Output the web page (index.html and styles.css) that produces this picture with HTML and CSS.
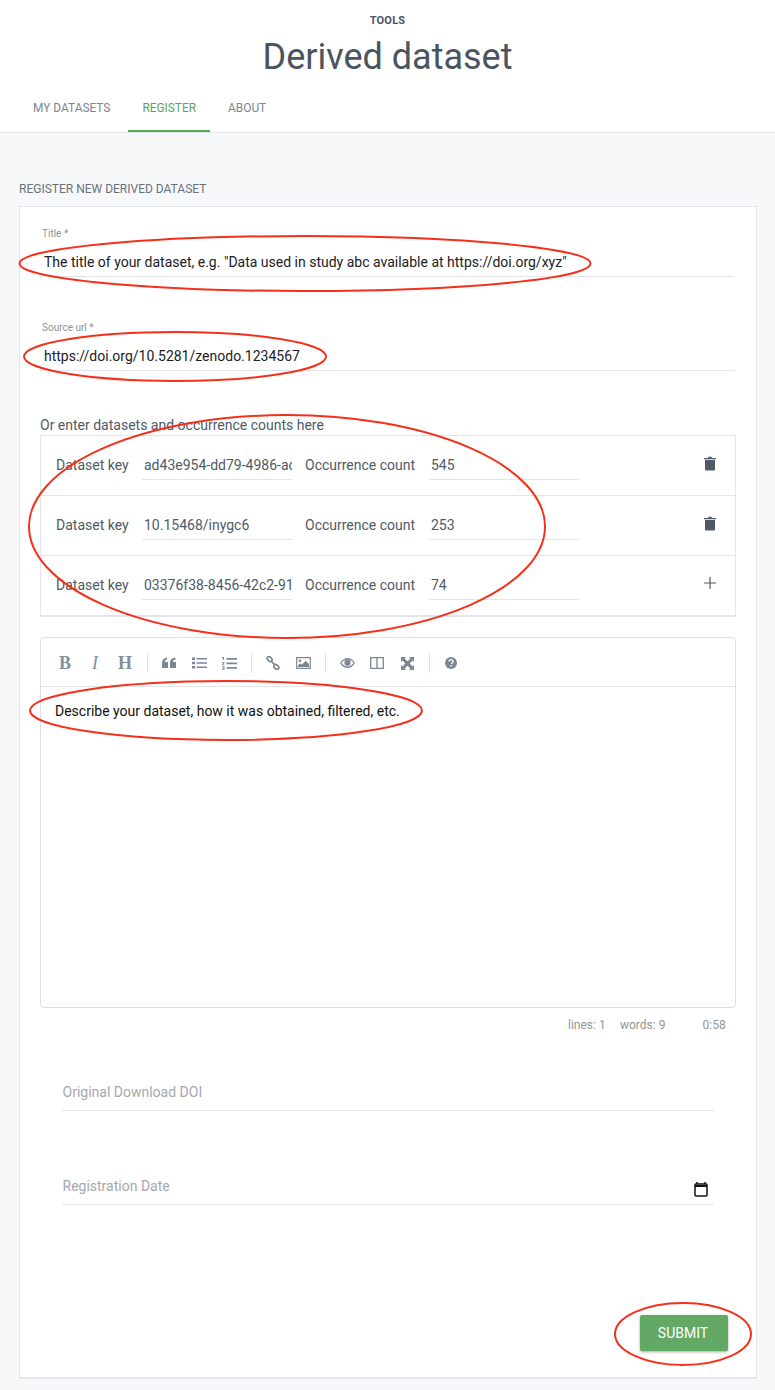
FILE: index.html
```html
<!DOCTYPE html>
<html lang="en">
<head>
<meta charset="utf-8">
<title>Derived dataset</title>
<link rel="stylesheet" href="styles.css">
</head>
<body>
<div class="page">
  <header class="head">
    <div class="eyebrow">Tools</div>
    <h1 class="title">Derived dataset</h1>
    <nav class="tabs">
      <a class="tab">My datasets</a>
      <a class="tab tab-on">Register</a>
      <a class="tab">About</a>
    </nav>
  </header>
  <main class="main">
    <h2 class="section">Register new derived dataset</h2>
    <section class="card">
      <div class="field field-title">
        <label class="flabel">Title *</label>
        <div class="finput">The title of your dataset, e.g. "Data used in study abc available at https://doi.org/xyz"</div>
      </div>
      <div class="field field-url">
        <label class="flabel">Source url *</label>
        <div class="finput">https://doi.org/10.5281/zenodo.1234567</div>
      </div>
      <div class="or">Or enter datasets and occurrence counts here</div>
      <div class="rows">
        <div class="row">
          <span class="rlabel rl1">Dataset key</span><div class="rinput">ad43e954-dd79-4986-ac</div>
          <span class="rlabel rl2">Occurrence count</span><div class="rinput">545</div>
          <span class="ricon"><svg width="12" height="15" viewBox="0 0 12 15"><path d="M0 2h4l.6-1.2h2.800L8 2h4v1.200H0z" fill="#4f5a66"/><path d="M1 4h10v9.400c0 .7-.5 1.200-1.200 1.200H2.200c-.7 0-1.200-.5-1.200-1.200z" fill="#4f5a66"/></svg></span>
        </div>
        <div class="row">
          <span class="rlabel rl1">Dataset key</span><div class="rinput">10.15468/inygc6</div>
          <span class="rlabel rl2">Occurrence count</span><div class="rinput">253</div>
          <span class="ricon"><svg width="12" height="15" viewBox="0 0 12 15"><path d="M0 2h4l.6-1.2h2.800L8 2h4v1.200H0z" fill="#4f5a66"/><path d="M1 4h10v9.400c0 .7-.5 1.200-1.200 1.200H2.200c-.7 0-1.200-.5-1.200-1.200z" fill="#4f5a66"/></svg></span>
        </div>
        <div class="row row-last">
          <span class="rlabel rl1">Dataset key</span><div class="rinput">03376f38-8456-42c2-91</div>
          <span class="rlabel rl2">Occurrence count</span><div class="rinput">74</div>
          <span class="ricon"><svg width="12" height="12" viewBox="0 0 12 12"><path d="M6 0v12M0 6h12" stroke="#4f5a66" stroke-width="1.200" fill="none"/></svg></span>
        </div>
      </div>
      <div class="editor">
        <div class="toolbar">
          <span class="tb tb-b">B</span>
          <span class="tb tb-i">I</span>
          <span class="tb tb-h">H</span>
          <i class="sep"></i>
          <span class="tb"><svg width="14" height="12" viewBox="0 0 14 12"><path d="M0 6.500C0 3 1.500 1 5 .5v2C3.800 2.800 3 3.600 3 5h3v6H0zM8 6.500C8 3 9.500 1 13.500.5v2C12 2.800 11 3.600 11 5h3v6H8z" fill="#7b8794"/></svg></span>
          <span class="tb"><svg width="15" height="12" viewBox="0 0 15 12"><path d="M0 .5h3v2.500H0zM0 4.800h3v2.500H0zM0 9h3v2.500H0zM4.500 1h10.500v1.600H4.500zM4.500 5.200h10.500v1.600H4.500zM4.500 9.400h10.500V11H4.500z" fill="#7b8794"/></svg></span>
          <span class="tb"><svg width="15" height="13" viewBox="0 0 15 13"><path d="M0 0h2v3H1V1H0zM0 5h2.500v1L1 7.400h1.500v.8H0v-1l1.500-1.400H0zM0 9.500h2.500v3.300H0V12h1.500v-.5H.5v-.7h1v-.5H0zM4.500 1h10.500v1.700H4.500zM4.500 5.500h10.500v1.700H4.500zM4.500 10h10.500v1.700H4.500z" fill="#7b8794"/></svg></span>
          <i class="sep"></i>
          <span class="tb"><svg width="14" height="14" viewBox="0 0 14 14"><g fill="none" stroke="#7b8794" stroke-width="1.700"><rect x=".9" y="1.300" width="5.600" height="3.600" rx="1.800" transform="rotate(45 3.700 3.100)"/><rect x="7.500" y="9.100" width="5.600" height="3.600" rx="1.800" transform="rotate(45 10.300 10.900)"/><path d="M5.500 5.500l3 3"/></g></svg></span>
          <span class="tb"><svg width="15" height="12" viewBox="0 0 15 12"><path d="M.7.7h13.600v10.600H.7z" fill="none" stroke="#7b8794" stroke-width="1.200"/><circle cx="4" cy="3.800" r="1.300" fill="#7b8794"/><path d="M2 10V8.300l2.500-2 1.600 1.300 3.600-3.800L13 7v3z" fill="#7b8794"/></svg></span>
          <i class="sep"></i>
          <span class="tb"><svg width="15" height="10" viewBox="0 0 15 10"><path d="M0 5C1.800 2 4.500 0 7.500 0S13.200 2 15 5c-1.800 3-4.500 5-7.500 5S1.800 8 0 5z" fill="#7b8794"/><path d="M1.400 5C3 3 5 1.600 7.500 1.600S12 3 13.600 5C12 7 10 8.400 7.500 8.400S3 7 1.400 5z" fill="#fff"/><circle cx="7.500" cy="4.700" r="3.100" fill="#7b8794"/></svg></span>
          <span class="tb"><svg width="14" height="12" viewBox="0 0 14 12"><path d="M.7.7h12.600v10.600H.7zM7 .7v10.600" fill="none" stroke="#7b8794" stroke-width="1.300"/></svg></span>
          <span class="tb"><svg width="13" height="13" viewBox="0 0 13 13"><path d="M0 0h5L3.600 1.400 6.500 4.300 9.400 1.400 8 0h5v5l-1.400-1.400L8.700 6.500l2.900 2.900L13 8v5H8l1.400-1.400-2.900-2.900-2.900 2.900L5 13H0V8l1.400 1.400 2.900-2.900-2.900-2.900L0 5z" fill="#7b8794"/></svg></span>
          <i class="sep"></i>
          <span class="tb"><svg width="12" height="12" viewBox="0 0 12 12"><circle cx="6" cy="6" r="6" fill="#7b8794"/><path d="M4 4.500C4 3.300 4.900 2.700 6 2.700s2 .7 2 1.800c0 1.400-1.500 1.400-1.500 2.500" fill="none" stroke="#fff" stroke-width="1.300"/><path d="M5.400 8h1.400v1.400H5.400z" fill="#fff"/></svg></span>
        </div>
        <div class="edit-body">Describe your dataset, how it was obtained, filtered, etc.</div>
      </div>
      <div class="status"><span class="st-l">lines: 1</span><span class="st-w">words: 9</span><span class="st-t">0:58</span></div>
      <div class="plain plain-doi"><span class="ph">Original Download DOI</span></div>
      <div class="plain plain-date"><span class="ph">Registration Date</span>
        <svg class="cal" width="14" height="15" viewBox="0 0 14 15"><path d="M3 0v2M11 0v2" stroke="#111" stroke-width="1.500"/><rect x="1" y="2" width="12" height="12" rx="1" fill="none" stroke="#111" stroke-width="1.500"/><path d="M1 3h12v2H1z" fill="#111"/></svg>
      </div>
      <div class="actions"><button class="submit" type="button">Submit</button></div>
    </section>
  </main>
  <svg class="marks" width="775" height="1390" viewBox="0 0 775 1390">
    <g fill="none" stroke="#f5301a" stroke-width="2">
      <ellipse cx="305" cy="263.500" rx="285.500" ry="27.500"/>
      <ellipse cx="175" cy="356.500" rx="151" ry="24.500"/>
      <ellipse cx="287" cy="526.500" rx="258" ry="111.500"/>
      <ellipse cx="226" cy="710.500" rx="196" ry="29.500"/>
      <ellipse cx="683" cy="1334" rx="68" ry="31"/>
    </g>
  </svg>
</div>
</body>
</html>
```

FILE: styles.css
```css
* { box-sizing: border-box; }
html, body { margin: 0; padding: 0; }
body { font-family: Roboto, "Liberation Sans", sans-serif; color: #4a5560; background: #f7f8fa; }
.page { position: relative; width: 775px; height: 1390px; overflow: hidden; }

.head { height: 133px; background: #fff; border-bottom: 1px solid #e4e7ea; text-align: center; padding-top: 14px; }
.eyebrow { font-size: 11px; line-height: 13px; font-weight: 700; text-transform: uppercase; color: #4a5560; letter-spacing: .2px; }
.title { margin: 0; font-size: 36px; line-height: 44px; font-weight: 400; color: #4a5560; padding-top: 8px; }
.tabs { display: flex; gap: 4px; padding: 9px 0 0 19px; }
.tab { font-size: 11.900px; line-height: 14px; text-transform: uppercase; color: #7b8692; padding: 13px 14px 15px; border-bottom: 2px solid transparent; font-weight: 400; height: 44px; }
.tab-on { color: #5aa55e; border-bottom-color: #5aa55e; }

.main { padding: 49px 18px 0 19px; }
.section { margin: 0; font-size: 12px; line-height: 14px; font-weight: 400; text-transform: uppercase; color: #6a7178; }
.card { margin-top: 10px; height: 1173px; background: #fff; border: 1px solid #e2e6ea; border-bottom-width: 2px; padding: 0 20px; }

.field { width: 694px; }
.field-title { padding-top: 21px; }
.field-url { padding-top: 45px; }
.flabel { display: block; font-size: 10px; line-height: 12px; color: #8a9299; padding-left: 2px; }
.finput { margin-top: 9px; height: 28px; padding: 4px 0 0 4px; font-size: 14px; line-height: 18px; color: #1c2026; border-bottom: 1px solid #e2e5e8; white-space: nowrap; overflow: hidden; }

.or { margin-top: 46px; font-size: 14px; line-height: 16px; color: #4f5a66; }
.rows { margin-top: 2px; width: 696px; border: 1px solid #e2e6ea; border-bottom-width: 2px; }
.row { display: flex; align-items: flex-start; height: 60px; border-bottom: 1px solid #e2e6ea; padding: 20px 0 0 15px; }
.row-last { height: 59px; border-bottom: none; }
.rlabel { font-size: 14px; line-height: 18px; color: #4f5a66; white-space: nowrap; }
.rl1 { width: 86px; }
.rl2 { width: 124px; margin-left: 13px; }
.rinput { width: 150px; height: 24px; padding: 0 0 0 2px; font-size: 14px; line-height: 18px; color: #4f5a66; border-bottom: 1px solid #e2e5e8; white-space: nowrap; overflow: hidden; }
.ricon { margin-left: auto; width: 12px; margin-right: 19px; height: 18px; display: flex; align-items: center; justify-content: center; margin-top: -2px; }

.editor { margin-top: 20px; width: 696px; height: 371px; border: 1px solid #dcdfe3; border-radius: 4px; }
.toolbar { display: flex; align-items: center; height: 49px; padding: 2px 0 0 9px; border-bottom: 1px solid #e2e5e8; }
.tb { width: 30px; height: 30px; display: flex; align-items: center; justify-content: center; color: #84909b; font-family: "Liberation Serif", serif; font-size: 18px; }
.tb-b { font-weight: 700; }
.tb-i { font-style: italic; font-weight: 400; }
.tb-h { font-weight: 700; }
.sep { width: 1px; height: 20px; background: #dfe2e5; margin: 0 6px 0 7px; }
.edit-body { padding: 15px 14px; font-size: 14px; line-height: 18px; color: #111; }

.status { display: flex; width: 696px; height: 18px; margin-top: 8px; font-size: 12px; line-height: 18px; color: #959595; }
.st-l { margin-left: 528px; width: 52px; }
.st-w { width: 82.500px; }

.plain { position: relative; margin-left: 22px; width: 652px; height: 28px; border-bottom: 1px solid #e2e5e8; font-size: 14px; line-height: 18px; }
.plain-doi { margin-top: 49px; }
.plain-date { margin-top: 66px; }
.ph { color: #a4a8ac; padding-left: .5px; }
.cal { position: absolute; right: 6.500px; top: 5px; }

.actions { display: flex; justify-content: flex-end; margin-top: 110px; padding-right: 8px; }
.submit { width: 88px; height: 36px; border: none; border-radius: 2px; background: #61a964; color: #fff; font-family: Roboto, sans-serif; font-size: 14px; text-transform: uppercase; padding: 0 2px 0 0; box-shadow: 0 1px 3px rgba(0,0,0,.35); }

.marks { position: absolute; left: 0; top: 0; pointer-events: none; }
```
